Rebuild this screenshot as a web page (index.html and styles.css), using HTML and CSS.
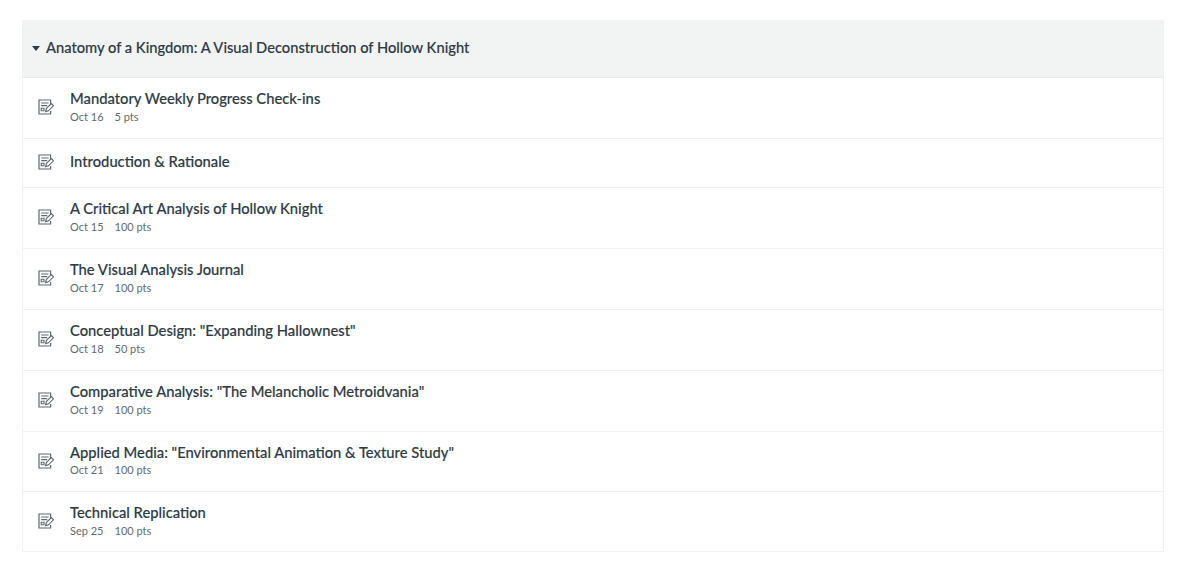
FILE: index.html
```html
<!DOCTYPE html>
<html lang="en">
<head>
<meta charset="utf-8">
<title>Anatomy of a Kingdom</title>
<link rel="stylesheet" href="styles.css">
</head>
<body>
<svg class="defs" width="0" height="0" aria-hidden="true">
  <symbol id="assign" viewBox="0 0 16 16">
    <path d="M12.6 5.2V1H1v14h11.6v-3" fill="none" stroke="currentColor" stroke-width="1.2"/>
    <path d="M3.2 4h7.4M3.2 6.6h6M3.2 9.2h2.8v2.6H3.2z" fill="none" stroke="currentColor" stroke-width="1.1"/>
    <path d="M7.6 12.6l.7-3 5-5 2.2 2.2-5 5z" fill="none" stroke="currentColor" stroke-width="1.1"/>
  </symbol>
</svg>
<main class="module">
  <header class="module-head">
    <span class="caret"></span>
    <h2 class="module-title">Anatomy of a Kingdom: A Visual Deconstruction of Hollow Knight</h2>
  </header>
  <ul class="items">
    <li class="item"><svg class="icon"><use href="#assign"/></svg><div><div class="name">Mandatory Weekly Progress Check-ins</div><div class="meta"><span>Oct 16</span><span>5 pts</span></div></div></li>
    <li class="item short"><svg class="icon"><use href="#assign"/></svg><div><div class="name">Introduction &amp; Rationale</div></div></li>
    <li class="item"><svg class="icon"><use href="#assign"/></svg><div><div class="name">A Critical Art Analysis of Hollow Knight</div><div class="meta"><span>Oct 15</span><span>100 pts</span></div></div></li>
    <li class="item"><svg class="icon"><use href="#assign"/></svg><div><div class="name">The Visual Analysis Journal</div><div class="meta"><span>Oct 17</span><span>100 pts</span></div></div></li>
    <li class="item"><svg class="icon"><use href="#assign"/></svg><div><div class="name">Conceptual Design: "Expanding Hallownest"</div><div class="meta"><span>Oct 18</span><span>50 pts</span></div></div></li>
    <li class="item"><svg class="icon"><use href="#assign"/></svg><div><div class="name">Comparative Analysis: "The Melancholic Metroidvania"</div><div class="meta"><span>Oct 19</span><span>100 pts</span></div></div></li>
    <li class="item tight"><svg class="icon"><use href="#assign"/></svg><div><div class="name">Applied Media: "Environmental Animation &amp; Texture Study"</div><div class="meta"><span>Oct 21</span><span>100 pts</span></div></div></li>
    <li class="item last"><svg class="icon"><use href="#assign"/></svg><div><div class="name">Technical Replication</div><div class="meta"><span>Sep 25</span><span>100 pts</span></div></div></li>
  </ul>
</main>
</body>
</html>
```
FILE: styles.css
```css
* { box-sizing: border-box; }
html, body { margin: 0; background: #fff; }
body {
  padding: 20px 36px 27px 22px;
  font-family: Lato, "Liberation Sans", sans-serif;
  color: #2d3b45;
}
.defs { display: block; height: 0; }
.module { border: 1px solid #eff0f1; border-top: 0; }
.module-head {
  height: 58px;
  background: #f2f4f4;
  display: flex;
  align-items: center;
  gap: 6px;
  padding: 0 0 4px 9px;
  border-bottom: 1px solid #e8eaea;
}
.caret {
  width: 0;
  height: 0;
  border-left: 4px solid transparent;
  border-right: 4px solid transparent;
  border-top: 5px solid #2d3b45;
  margin-top: 3px;
}
.module-title { margin: 0; font-size: 14.7px; font-weight: 500; line-height: 20px; -webkit-text-stroke: 0.15px #2d3b45; }
.items { list-style: none; margin: 0; padding: 0; }
.item {
  height: 61px;
  display: flex;
  align-items: center;
  padding: 0 0 3px 15px;
  gap: 16px;
  border-bottom: 1px solid #eff0f1;
}
.item.tight { height: 60px; }
.item.last { height: 59px; border-bottom: 0; padding-bottom: 2px; }
.item.short { height: 49px; padding-bottom: 4px; }
.icon { width: 16px; height: 16px; color: #5c6a73; flex: none; margin-top: 1px; }
.name { font-size: 14.75px; font-weight: 500; line-height: 20px; -webkit-text-stroke: 0.15px #2d3b45; }
.meta { display: flex; gap: 11px; font-size: 11px; line-height: 16px; color: #606a72; margin-top: 0.5px; }
```
